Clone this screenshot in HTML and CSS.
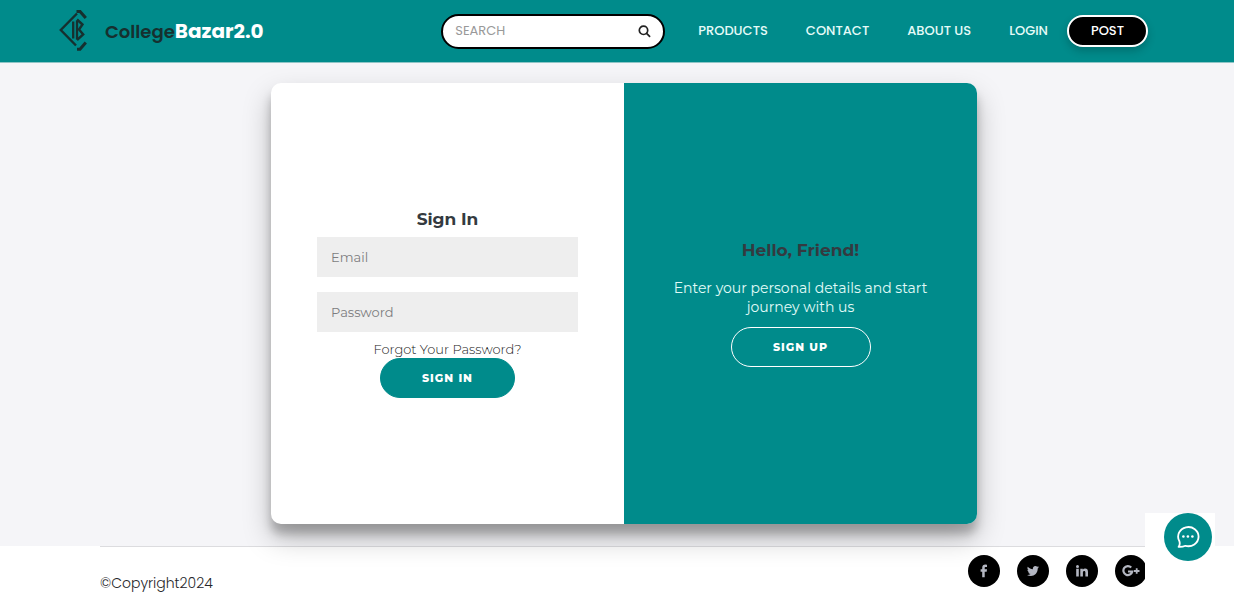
FILE: index.html
```html
<!DOCTYPE html>
<html lang="en">
<head>
<meta charset="utf-8">
<meta name="viewport" content="width=device-width, initial-scale=1">
<title>CollegeBazar2.0 - Sign In</title>
<link rel="stylesheet" href="styles.css">
</head>
<body>
<header class="site-header">
  <a class="brand" href="#">
    <svg class="brand-logo" viewBox="0 0 28 42" fill="none" stroke="currentColor" stroke-width="2.4" aria-hidden="true">
      <path d="M18 3.500 1.800 20 17 35.500"/>
      <path d="M17.500 1.400h3.500L26.800 8" stroke-width="3"/>
      <path d="M18 39.300h3L26.800 32.500" stroke-width="3"/>
      <path d="M14.200 11.500v17M18 10.500v19" stroke-width="2.300"/>
      <path d="M18 9.500 23.500 14.500 20 19.500 24.200 24.500 18 30" stroke-width="2.400"/>
    </svg>
    <span class="brand-name">College<strong class="brand-accent">Bazar2.0</strong></span>
  </a>
  <form class="search" role="search">
    <input class="search-input" type="search" placeholder="SEARCH" aria-label="Search">
    <button class="search-button" type="button" aria-label="Submit search">
      <svg viewBox="0 0 14 14" width="14" height="14" fill="none" stroke="currentColor" stroke-width="1.700" aria-hidden="true"><circle cx="6.500" cy="6.300" r="4.200"/><path d="M9.600 9.400l3 3" stroke-linecap="round"/></svg>
    </button>
  </form>
  <nav class="nav">
    <a class="nav-link" href="#">PRODUCTS</a>
    <a class="nav-link" href="#">CONTACT</a>
    <a class="nav-link" href="#">ABOUT US</a>
    <a class="nav-link" href="#">LOGIN</a>
  </nav>
  <button class="post-button" type="button">POST</button>
</header>

<main class="main">
  <div class="card">
    <form class="panel">
      <h1 class="title">Sign In</h1>
      <div class="fields">
        <input class="field" type="email" placeholder="Email" aria-label="Email">
        <input class="field" type="password" placeholder="Password" aria-label="Password">
      </div>
      <a class="forgot" href="#">Forgot Your Password?</a>
      <button class="button" type="button">SIGN IN</button>
    </form>
    <section class="panel panel-accent">
      <h2 class="title title-spaced">Hello, Friend!</h2>
      <p class="intro">Enter your personal details and start journey with us</p>
      <button class="button button-outline" type="button">SIGN UP</button>
    </section>
  </div>
</main>

<footer class="footer">
  <div class="footer-inner">
    <p class="copyright">©Copyright2024</p>
    <div class="social">
      <a class="social-link" href="#" aria-label="Facebook"><svg viewBox="0 0 16 16" width="16" height="16" fill="currentColor" aria-hidden="true"><path d="M11 1.700V4H9.700C8.900 4 8.700 4.400 8.700 5V6.300H11L10.700 8.700H8.700V14.300H6.200V8.700H4.600V6.300H6.200V4.800C6.200 2.700 7.500 1.600 9.200 1.600Z"/></svg></a>
      <a class="social-link" href="#" aria-label="Twitter"><svg viewBox="0 0 16 16" width="16" height="16" fill="currentColor" aria-hidden="true"><path d="M14 4.200c-.4.600-.8 1-1.300 1.300C12.900 10 9.500 13 5.900 13 4.500 13 3.100 12.600 2 11.900c1.300.1 2.600-.2 3.600-1-1.100 0-2-.7-2.300-1.700h1.100C3.200 8.900 2.400 7.900 2.400 6.700l1.100.3C2.400 6.200 2.100 4.800 2.800 3.700 4.100 5.200 5.900 6.200 7.900 6.300 7.500 4.500 8.800 3 10.400 3c.7 0 1.300.3 1.800.8l1.600-.6-1.100 1.300Z"/></svg></a>
      <a class="social-link" href="#" aria-label="LinkedIn"><svg viewBox="0 0 16 16" width="16" height="16" fill="currentColor" aria-hidden="true"><circle cx="3.500" cy="3.400" r="1.500"/><path d="M2.200 5.800h2.600v7.600H2.200zM6.300 5.800h2.500v1c.5-.8 1.300-1.200 2.300-1.200 2 0 2.900 1.200 2.900 3.300v4.500h-2.600V9.500c0-1-.4-1.600-1.100-1.600-.9 0-1.400.6-1.400 1.700v3.800H6.300z"/></svg></a>
      <a class="social-link" href="#" aria-label="Google Plus"><svg viewBox="0 0 18 14" width="18" height="14" fill="none" stroke="currentColor" stroke-width="2.200" aria-hidden="true"><path d="M9.200 3.500A4.500 4.500 0 1 0 10.300 7.500H6"/><path d="M12 7h5.500M14.700 4.300v5.400" stroke-width="1.800"/></svg></a>
    </div>
  </div>
</footer>

<aside class="chat">
  <button class="chat-button" type="button" aria-label="Open chat">
    <svg viewBox="0 0 24 24" width="24" height="24" fill="none" stroke="currentColor" stroke-width="1.800" stroke-linejoin="round" aria-hidden="true"><path d="M3.400 16.200A10.200 9.600 0 1 1 9.400 20.800C7.900 21.500 5.400 22.100 2.600 21.900 4.100 20 3.900 18 3.400 16.200Z"/><g fill="currentColor" stroke="none"><circle cx="7.400" cy="11.500" r="1.300"/><circle cx="11.900" cy="11.500" r="1.300"/><circle cx="16.400" cy="11.500" r="1.300"/></g></svg>
  </button>
</aside>
</body>
</html>
```
FILE: styles.css
```css
:root {
  --teal: #008b8b;
  --ink: #343a40;
  --display: Poppins, Inter, sans-serif;
  --body: Montserrat, Inter, sans-serif;
}

*,
*::before,
*::after {
  box-sizing: border-box;
}

body {
  margin: 0;
  min-height: 100vh;
  background: #fff;
  color: var(--ink);
  font-family: var(--body);
  font-size: 14px;
}

a {
  color: inherit;
  text-decoration: none;
}

button,
input {
  font: inherit;
}

.site-header {
  display: flex;
  align-items: center;
  min-height: 63px;
  padding: 0 86px 0 59px;
  background: var(--teal);
  border-bottom: 1px solid #8fc5c6;
  font-family: var(--display);
}

.brand {
  display: flex;
  align-items: center;
  gap: 18px;
  margin-right: auto;
  color: #16302f;
}

.brand-logo {
  width: 28px;
  height: 42px;
}

.brand-name {
  font-size: 18px;
  font-weight: 600;
}

.brand-accent {
  font-size: 20px;
  font-weight: 700;
  color: #fff;
}

.search {
  display: flex;
  align-items: center;
  width: 224px;
  height: 35px;
  margin-right: 33px;
  padding: 0 12px;
  background: #fff;
  border: 2px solid #000;
  border-radius: 18px;
}

.search-input {
  flex: 1;
  min-width: 0;
  padding: 0;
  border: 0;
  outline: 0;
  background: none;
  font-size: 13px;
}

.search-input::placeholder {
  color: #999;
}

.search-button {
  display: flex;
  padding: 0;
  border: 0;
  background: none;
  color: #222;
}

.nav {
  display: flex;
  gap: 38px;
  margin-right: 19px;
}

.nav-link {
  color: #e6fbf8;
  font-size: 13px;
  font-weight: 500;
}

.post-button {
  width: 81px;
  height: 32px;
  padding: 0;
  border: 2px solid #fff;
  border-radius: 16px;
  background: #000;
  color: #fff;
  font-size: 13px;
  font-weight: 500;
  box-shadow: 0 4px 8px rgba(0, 0, 0, 0.2);
}

.main {
  display: flex;
  justify-content: center;
  padding: 20px 0 22px 14px;
  background: #f5f5f8;
}

.card {
  position: relative;
  display: grid;
  grid-template-columns: 1fr 1fr;
  width: 706px;
  max-width: 100%;
  min-height: 441px;
  overflow: hidden;
  border-radius: 10px;
  background: #fff;
  box-shadow: 0 14px 28px rgba(0, 0, 0, 0.25), 0 10px 10px rgba(0, 0, 0, 0.22);
}

.panel {
  display: flex;
  flex-direction: column;
  align-items: center;
  justify-content: center;
  padding: 0 46px;
  text-align: center;
}

.panel-accent {
  background: var(--teal);
}

.title {
  margin: 0 0 8px;
  font-size: 17px;
  font-weight: 700;
  line-height: 20px;
}

.title-spaced {
  margin-bottom: 19px;
}

.fields {
  display: grid;
  gap: 15px;
  width: 100%;
}

.field {
  width: 100%;
  height: 40px;
  padding: 0 14px;
  border: 0;
  background: #eee;
  font-size: 13px;
}

.field::placeholder {
  color: #7d7d80;
}

.forgot {
  margin-top: 8px;
  color: #222;
  font-size: 13px;
  font-weight: 300;
  line-height: 18px;
}

.button {
  min-width: 135px;
  height: 40px;
  border: 1px solid var(--teal);
  border-radius: 20px;
  background: var(--teal);
  color: #fff;
  font-size: 11px;
  font-weight: 800;
  letter-spacing: 1px;
}

.button-outline {
  min-width: 140px;
  border-color: #fff;
}

.intro {
  margin: 0 0 10px;
  color: #e2fbf8;
  font-size: 14px;
  line-height: 19px;
}

.footer {
  padding: 0 87px 0 100px;
}

.footer-inner {
  display: flex;
  align-items: flex-start;
  justify-content: space-between;
  padding-top: 8px;
  border-top: 1px solid #dcdcdf;
}

.copyright {
  margin: 18px 0 0;
  color: #26262a;
  font-family: var(--display);
  font-size: 14px;
  font-weight: 300;
  line-height: 20px;
}

.social {
  display: flex;
  gap: 17px;
}

.social-link {
  display: flex;
  align-items: center;
  justify-content: center;
  width: 32px;
  height: 32px;
  border-radius: 50%;
  background: #000;
  color: #b4b7c2;
}

.chat {
  position: fixed;
  right: 19px;
  bottom: 0;
  display: flex;
  justify-content: flex-end;
  align-items: flex-start;
  width: 70px;
  height: 98px;
  padding-right: 3px;
  background: #fff;
}

.chat-button {
  display: flex;
  align-items: center;
  justify-content: center;
  width: 48px;
  height: 48px;
  padding: 0;
  border: 0;
  border-radius: 50%;
  background: var(--teal);
  color: #fff;
}
```
